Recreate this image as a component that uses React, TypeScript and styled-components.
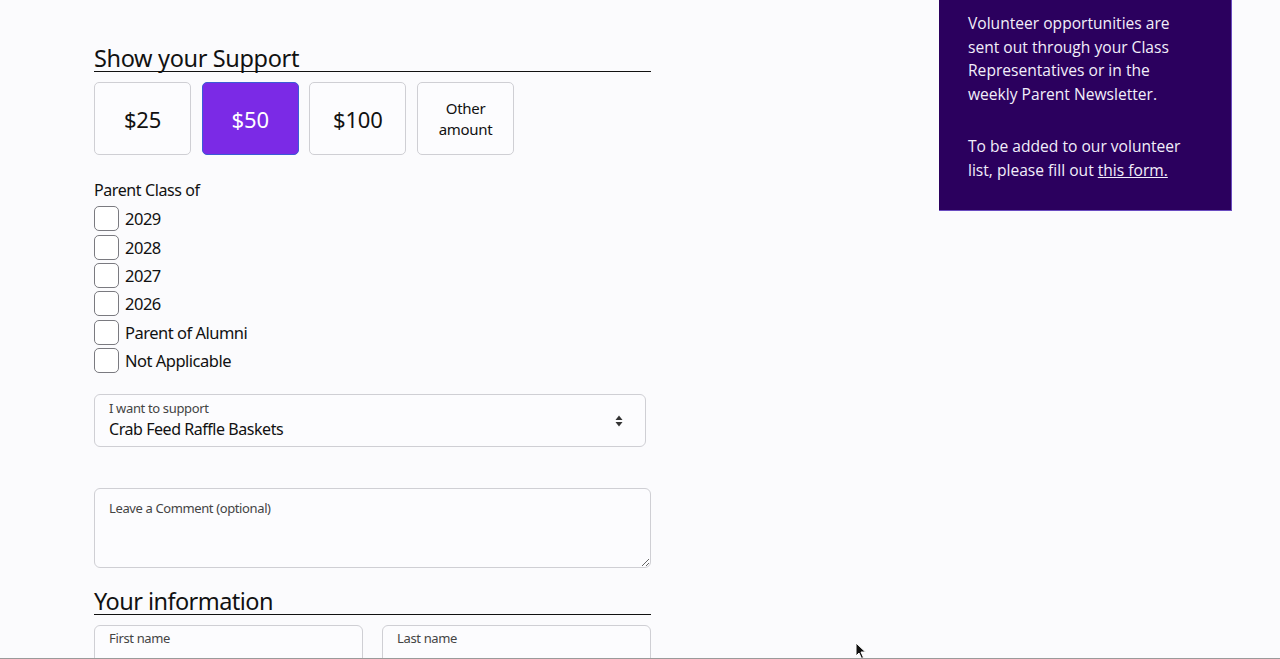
import React from "react"
import styled, { createGlobalStyle } from "styled-components"

const GlobalStyle = createGlobalStyle`
	html, body {
		margin: 0;
		padding: 0;
		background: #fbfbfd;
		color: #111;
		font-family: "Noto Sans", "Open Sans", sans-serif;
	}
	* {
		box-sizing: border-box;
	}
`

const Page = styled.div`
	display: flex;
	align-items: flex-start;
	height: 659px;
	overflow: hidden;
	padding-left: 94px;
`

const FormColumn = styled.div`
	width: 557px;
	padding-top: 44px;
	display: flex;
	flex-direction: column;
`

const SectionTitle = styled.h2`
	margin: 0;
	font-size: 23.5px;
	font-weight: 400;
	letter-spacing: -0.35px;
	line-height: 26px;
	border-bottom: 1px solid #111;
	padding-top: 1px;
	padding-bottom: 0;
`

const AmountRow = styled.div`
	display: flex;
	gap: 10.7px;
	margin-top: 10px;
`

const AmountButton = styled.button<{ $active?: boolean; $small?: boolean }>`
	width: 97px;
	height: 73px;
	border-radius: 5px;
	border: 1px solid ${(p) => (p.$active ? "#3b5bd6" : "#cfcfd4")};
	background: ${(p) => (p.$active ? "#7b2ae6" : "#fcfcfe")};
	color: ${(p) => (p.$active ? "#fff" : "#111")};
	font-family: inherit;
	font-size: ${(p) => (p.$small ? "15px" : "22px")};
	letter-spacing: ${(p) => (p.$small ? "-0.3px" : "-0.2px")};
	line-height: ${(p) => (p.$small ? "21px" : "26px")};
	padding: 0;
	cursor: pointer;
`

const GroupLabel = styled.div`
	margin-top: 24px;
	font-size: 16px;
	letter-spacing: -0.4px;
	line-height: 22px;
`

const CheckList = styled.div`
	display: flex;
	flex-direction: column;
	margin-top: 3px;
`

const CheckRow = styled.label`
	display: flex;
	align-items: center;
	gap: 6px;
	height: 28.4px;
	font-size: 16.5px;
	letter-spacing: -0.5px;
	padding-top: 1px;
`

const CheckBox = styled.input`
	appearance: none;
	margin: 0;
	width: 25px;
	height: 25px;
	border: 1px solid #7a7a80;
	border-radius: 5px;
	background: #fff;
`

const SelectField = styled.div`
	position: relative;
	margin-top: 20px;
	width: 552px;
	height: 53px;
	border: 1px solid #cfcfd4;
	border-radius: 6px;
	background: #fcfcfe;
	padding: 5px 14px 0;
`

const FieldLabel = styled.div`
	font-size: 13px;
	letter-spacing: -0.35px;
	line-height: 16px;
	color: #444;
`

const SelectValue = styled.div`
	font-size: 16px;
	letter-spacing: -0.45px;
	line-height: 22px;
	margin-top: 2px;
`

const Arrows = styled.svg`
	position: absolute;
	right: 22px;
	top: 20px;
`

const CommentBox = styled.textarea`
	margin-top: 41px;
	width: 557px;
	height: 80px;
	border: 1px solid #cfcfd4;
	border-radius: 6px;
	background: #fcfcfe;
	padding: 10px 14px;
	font-family: inherit;
	font-size: 13px;
	letter-spacing: -0.38px;
	resize: vertical;
	&::placeholder {
		color: #444;
	}
`

const SecondTitle = styled(SectionTitle)`
	margin-top: 19px;
	letter-spacing: -0.55px;
`

const NameRow = styled.div`
	display: flex;
	justify-content: space-between;
	margin-top: 10px;
`

const NameField = styled.div`
	width: 269px;
	height: 56px;
	border: 1px solid #cfcfd4;
	border-radius: 6px;
	background: #fcfcfe;
	padding: 4px 14px 0;
`

const SidePanel = styled.aside`
	margin-left: 288px;
	width: 293px;
	height: 211px;
	background: #2b005e;
	border-right: 1px solid #6a4cc0;
	border-bottom: 1px solid #6a4cc0;
	padding: 12px 29px 0;
	color: #f2eefa;
	font-family: "Open Sans", sans-serif;
	font-size: 15.6px;
	line-height: 23.5px;
`

const PanelText = styled.p`
	margin: 0 0 29px;
`

const PanelLink = styled.a`
	color: inherit;
	text-decoration: underline;
`

const Cursor = styled.svg`
	position: fixed;
	left: 855px;
	top: 642px;
`

const BottomEdge = styled.div`
	position: fixed;
	left: 0;
	right: 0;
	bottom: 0;
	height: 1px;
	background: #9a9a9a;
`

const years = ["2029", "2028", "2027", "2026", "Parent of Alumni", "Not Applicable"]

export default function App() {
	return (
		<>
			<GlobalStyle />
			<Page>
				<FormColumn>
					<SectionTitle>Show your Support</SectionTitle>
					<AmountRow>
						<AmountButton>$25</AmountButton>
						<AmountButton $active>$50</AmountButton>
						<AmountButton>$100</AmountButton>
						<AmountButton $small>
							Other
							<br />
							amount
						</AmountButton>
					</AmountRow>
					<GroupLabel>Parent Class of</GroupLabel>
					<CheckList>
						{years.map((y) => (
							<CheckRow key={y}>
								<CheckBox type="checkbox" />
								{y}
							</CheckRow>
						))}
					</CheckList>
					<SelectField>
						<FieldLabel>I want to support</FieldLabel>
						<SelectValue>Crab Feed Raffle Baskets</SelectValue>
						<Arrows width="8" height="12" viewBox="0 0 8 12">
							<path d="M4 0.5 L7.5 5 H0.5 Z" fill="#333" />
							<path d="M4 11.5 L7.5 7 H0.5 Z" fill="#333" />
						</Arrows>
					</SelectField>
					<CommentBox placeholder="Leave a Comment (optional)" />
					<SecondTitle>Your information</SecondTitle>
					<NameRow>
						<NameField>
							<FieldLabel>First name</FieldLabel>
						</NameField>
						<NameField>
							<FieldLabel>Last name</FieldLabel>
						</NameField>
					</NameRow>
				</FormColumn>
				<SidePanel>
					<PanelText>
						Volunteer opportunities are sent out through your Class Representatives or in the weekly
						Parent Newsletter.
					</PanelText>
					<PanelText>
						To be added to our volunteer list, please fill out <PanelLink href="#">this form.</PanelLink>
					</PanelText>
				</SidePanel>
			</Page>
			<Cursor width="12" height="18" viewBox="0 0 12 18">
				<path d="M1 1 L1 14 L4 11 L6.5 16.5 L8.5 15.5 L6 10 L10.5 10 Z" fill="#111" stroke="#fff" strokeWidth="1" />
			</Cursor>
			<BottomEdge />
		</>
	)
}
